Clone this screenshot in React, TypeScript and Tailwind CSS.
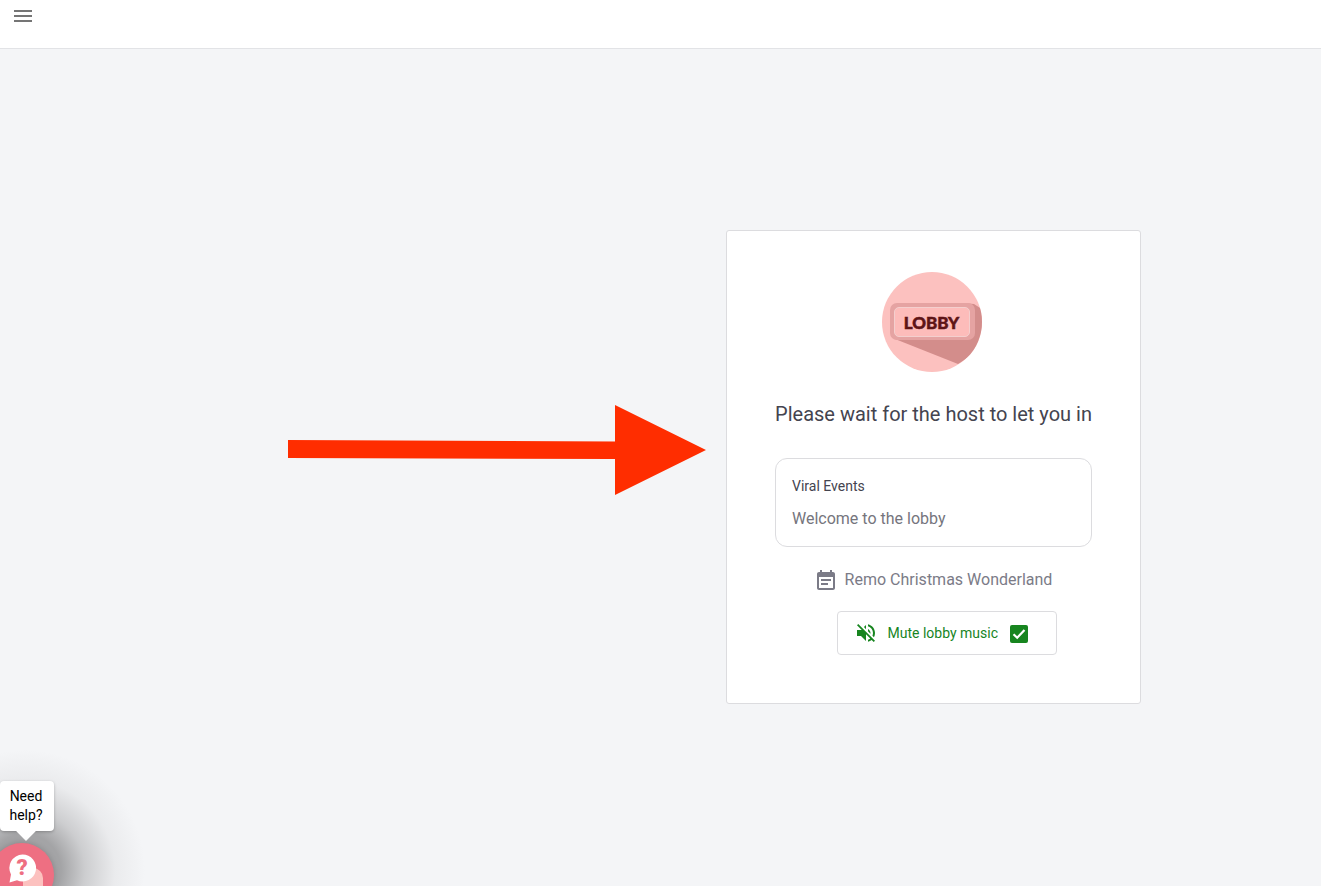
import React from "react";

function LobbyLogo() {
  return (
    <svg width="100" height="100" viewBox="0 0 100 100" className="block">
      <defs>
        <clipPath id="lobbyClip">
          <circle cx="50" cy="50" r="50" />
        </clipPath>
      </defs>
      <circle cx="50" cy="50" r="50" fill="#fcc1bf" />
      <g clipPath="url(#lobbyClip)">
        <path d="M13 67 L76 92 L110 70 L104 40 L92 32 L80 31 Z" fill="#d38d8b" />
      </g>
      <rect x="8" y="31" width="85" height="37" rx="7" fill="#e5a3a2" />
      <rect x="12.500" y="35.500" width="75" height="29" rx="4.500" fill="#fdbcba" stroke="#f4cfce" strokeWidth="1" />
      <text
        x="49.500"
        y="57"
        textAnchor="middle"
        fontFamily="Lato, 'Open Sans', sans-serif"
        fontWeight="900"
        fontSize="17"
        stroke="#5e1416"
        strokeWidth="0.5"
        fill="#5e1416"
      >
        LOBBY
      </text>
    </svg>
  );
}

function CalendarIcon() {
  return (
    <svg width="24" height="24" viewBox="0 0 24 24" fill="#7b7b87">
      <path d="M19 4h-1V2h-2v2H8V2H6v2H5c-1.100 0-2 .9-2 2v14c0 1.100.9 2 2 2h14c1.100 0 2-.9 2-2V6c0-1.100-.9-2-2-2zm0 16H5V9h14v11z" />
      <path d="M7 11h10v2H7zM7 15h7v2H7z" />
    </svg>
  );
}

function MuteIcon() {
  return (
    <svg width="24" height="24" viewBox="0 0 24 24" fill="#17851f">
      <path d="M16.500 12c0-1.770-1.020-3.290-2.500-4.030v2.210l2.450 2.450c.03-.2.050-.41.050-.63zm2.500 0c0 .94-.2 1.820-.54 2.640l1.510 1.510C20.630 14.910 21 13.500 21 12c0-4.280-2.990-7.860-7-8.770v2.060c2.890.86 5 3.540 5 6.710zM4.270 3L3 4.270 7.730 9H3v6h4l5 5v-6.730l4.250 4.250c-.67.52-1.420.93-2.250 1.180v2.060c1.380-.31 2.630-.95 3.690-1.810L19.730 21 21 19.730l-9-9L4.270 3zM12 4L9.910 6.090 12 8.180V4z" />
    </svg>
  );
}

function Arrow() {
  return (
    <svg width="420" height="92" viewBox="0 0 420 92" className="block">
      <path d="M1 36 L328 37.500 L328 1 L419 46 L328 91 L328 55 L1 54 Z" fill="#ff2d00" />
    </svg>
  );
}

function HelpIcon() {
  return (
    <svg width="64" height="43" viewBox="0 0 64 43" className="block">
      <path d="M33 43 L33 35 A10 10 0 0 1 53 35 L53 43 Z" fill="#fcc1bf" />
      <path d="M32.500 11.500 a13.500 13.500 0 1 1 -5.500 25.800 L 19.500 39.500 L 21 31.500 A13.500 13.500 0 0 1 32.500 11.500 Z" fill="#ffffff" />
      <text x="32" y="32" textAnchor="middle" fontFamily="Roboto, sans-serif" fontWeight="900" fontSize="22" fill="#ee6f82">
        ?
      </text>
    </svg>
  );
}

export default function App() {
  return (
    <div className="relative h-[886px] overflow-hidden bg-[#f4f5f7] font-['Roboto',sans-serif]">
      <header className="h-[49px] border-b border-[#e2e3e6] bg-white pl-[14px] pt-[10px]">
        <div className="flex w-[18px] flex-col gap-[3px]">
          <span className="h-[2px] bg-[#757575]" />
          <span className="h-[2px] bg-[#757575]" />
          <span className="h-[2px] bg-[#757575]" />
        </div>
      </header>

      <main className="flex justify-end pr-[180px] pt-[181px]">
        <section className="flex h-[474px] w-[415px] flex-col items-center rounded-[3px] border border-[#dcdcdf] bg-white pt-[41px]">
          <div className="mr-[3px]">
            <LobbyLogo />
          </div>
          <h1 className="mt-[28px] text-[20px] leading-[28px] font-normal text-[#44444f]">
            Please wait for the host to let you in
          </h1>
          <div className="mt-[30px] h-[89px] w-[317px] rounded-[12px] border border-[#dcdcdf] px-4 pt-[17px]">
            <p className="text-[14px] leading-[20px] text-[#44444f]">Viral Events</p>
            <p className="mt-[13px] text-[16px] leading-[20px] text-[#75757d]">Welcome to the lobby</p>
          </div>
          <div className="mt-[21px] mr-[1px] flex h-[24px] items-center gap-[7px]">
            <CalendarIcon />
            <span className="text-[16px] leading-[24px] text-[#7b7b87]">Remo Christmas Wonderland</span>
          </div>
          <div className="mt-[19px] ml-[26px] flex h-[44px] w-[220px] items-center rounded-[4px] border border-[#dcdcdf] pl-[16px]">
            <MuteIcon />
            <span className="ml-[10px] mt-[1px] text-[14px] font-normal text-[#17851f]">Mute lobby music</span>
            <span className="ml-[12px] mt-[1px] flex h-[18px] w-[18px] items-center justify-center rounded-[2px] bg-[#17851f]">
              <svg width="16" height="16" viewBox="0 0 16 16" fill="none" stroke="#ffffff" strokeWidth="2.200">
                <path d="M2.500 8.200 L6.200 11.800 L13.500 4" />
              </svg>
            </span>
          </div>
        </section>
      </main>

      <div className="absolute left-[287px] top-[404px]">
        <Arrow />
      </div>

      <div className="absolute left-[-95px] top-[750px] h-[240px] w-[240px] rounded-full bg-[radial-gradient(closest-side,rgba(110,110,112,0.6)_30%,rgba(150,150,152,0.42)_50%,rgba(200,200,202,0.22)_75%,rgba(243,244,246,0)_100%)]" />

      <div className="absolute left-0 top-[781px] h-[50px] w-[54px] rounded-[4px] bg-white pr-[2px] pt-[6px] text-center text-[14px] leading-[19px] text-black shadow-[0_1px_3px_rgba(0,0,0,0.25)]">
        Need
        <br />
        help?
        <span className="absolute left-[19px] top-[43px] h-[14px] w-[14px] rotate-45 bg-white" />
      </div>

      <div className="absolute left-[-10px] top-[843px] h-[64px] w-[64px] rounded-full bg-[#ee6f82] shadow-[0_0_6px_rgba(0,0,0,0.2)]">
        <HelpIcon />
      </div>
    </div>
  );
}
